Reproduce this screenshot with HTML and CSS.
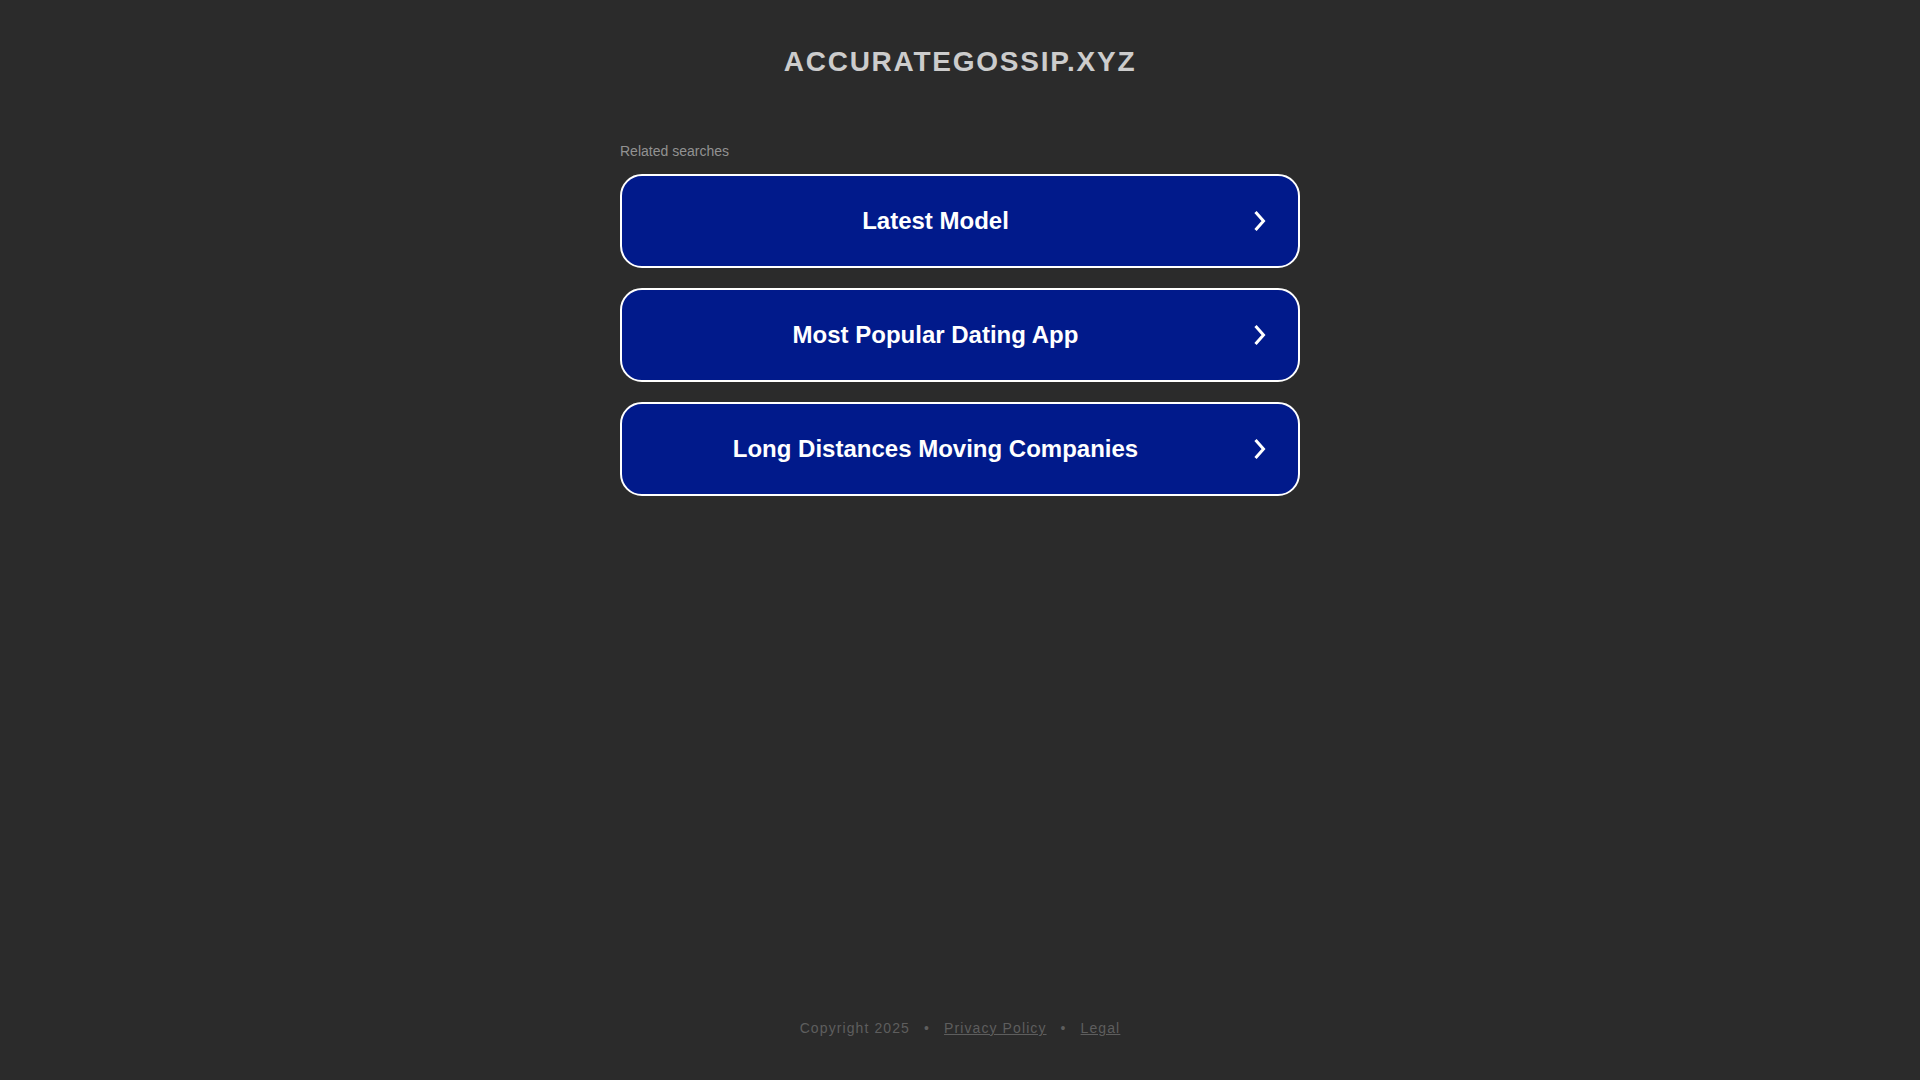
FILE: index.html
```html
<!DOCTYPE html>
<html lang="en">
<head>
<meta charset="utf-8">
<title>accurategossip.xyz</title>
<link rel="stylesheet" href="styles.css">
</head>
<body>
<div class="page">
  <header class="header">
    <h1 class="domain">ACCURATEGOSSIP.XYZ</h1>
  </header>
  <main class="main">
    <div class="related">
      <p class="related-title">Related searches</p>
      <ul class="links">
        <li><a class="link" href="#"><span class="link-text">Latest Model</span><svg class="chev" width="14" height="22" viewBox="0 0 14 22"><polyline points="2.5,2 10.5,11 2.5,20" fill="none" stroke="#fff" stroke-width="3"/></svg></a></li>
        <li><a class="link" href="#"><span class="link-text">Most Popular Dating App</span><svg class="chev" width="14" height="22" viewBox="0 0 14 22"><polyline points="2.5,2 10.5,11 2.5,20" fill="none" stroke="#fff" stroke-width="3"/></svg></a></li>
        <li><a class="link" href="#"><span class="link-text">Long Distances Moving Companies</span><svg class="chev" width="14" height="22" viewBox="0 0 14 22"><polyline points="2.5,2 10.5,11 2.5,20" fill="none" stroke="#fff" stroke-width="3"/></svg></a></li>
      </ul>
    </div>
  </main>
  <footer class="footer">
    <span>Copyright 2025</span>
    <span class="sep">•</span>
    <a class="foot-link" href="#">Privacy Policy</a>
    <span class="sep">•</span>
    <a class="foot-link" href="#">Legal</a>
  </footer>
</div>
</body>
</html>
```
FILE: styles.css
```css
html, body {
  margin: 0;
  padding: 0;
  background: #2b2b2b;
  font-family: "Liberation Sans", Arial, sans-serif;
}

.page {
  min-height: 100vh;
  display: flex;
  flex-direction: column;
  align-items: center;
}

.header {
  padding-top: 45px;
  text-align: center;
}

.domain {
  margin: 0;
  font-size: 28px;
  line-height: 34px;
  font-weight: bold;
  letter-spacing: 1.75px;
  color: #cccccc;
}

.main {
  width: 680px;
  padding-top: 64px;
}

.related-title {
  margin: 0 0 15px 0;
  font-size: 14px;
  line-height: 16px;
  color: #929292;
}

.links {
  list-style: none;
  margin: 0;
  padding: 0;
  display: flex;
  flex-direction: column;
  gap: 20px;
}

.link {
  box-sizing: border-box;
  height: 94px;
  display: flex;
  align-items: center;
  gap: 24px;
  padding: 0 31px 0 20px;
  background: #011a8b;
  border: 2px solid #ffffff;
  border-radius: 22px;
  text-decoration: none;
  color: #ffffff;
}

.link-text {
  flex: 1;
  text-align: center;
  font-size: 24px;
  font-weight: bold;
  line-height: 28px;
}

.chev {
  display: block;
  flex: none;
}

.footer {
  margin-top: auto;
  padding-bottom: 44px;
  font-size: 14px;
  line-height: 16px;
  letter-spacing: 1.1px;
  color: #5e5e5e;
  display: flex;
}

.sep {
  margin: 0 14px;
}

.foot-link {
  color: #5e5e5e;
  text-decoration: underline;
}
```
